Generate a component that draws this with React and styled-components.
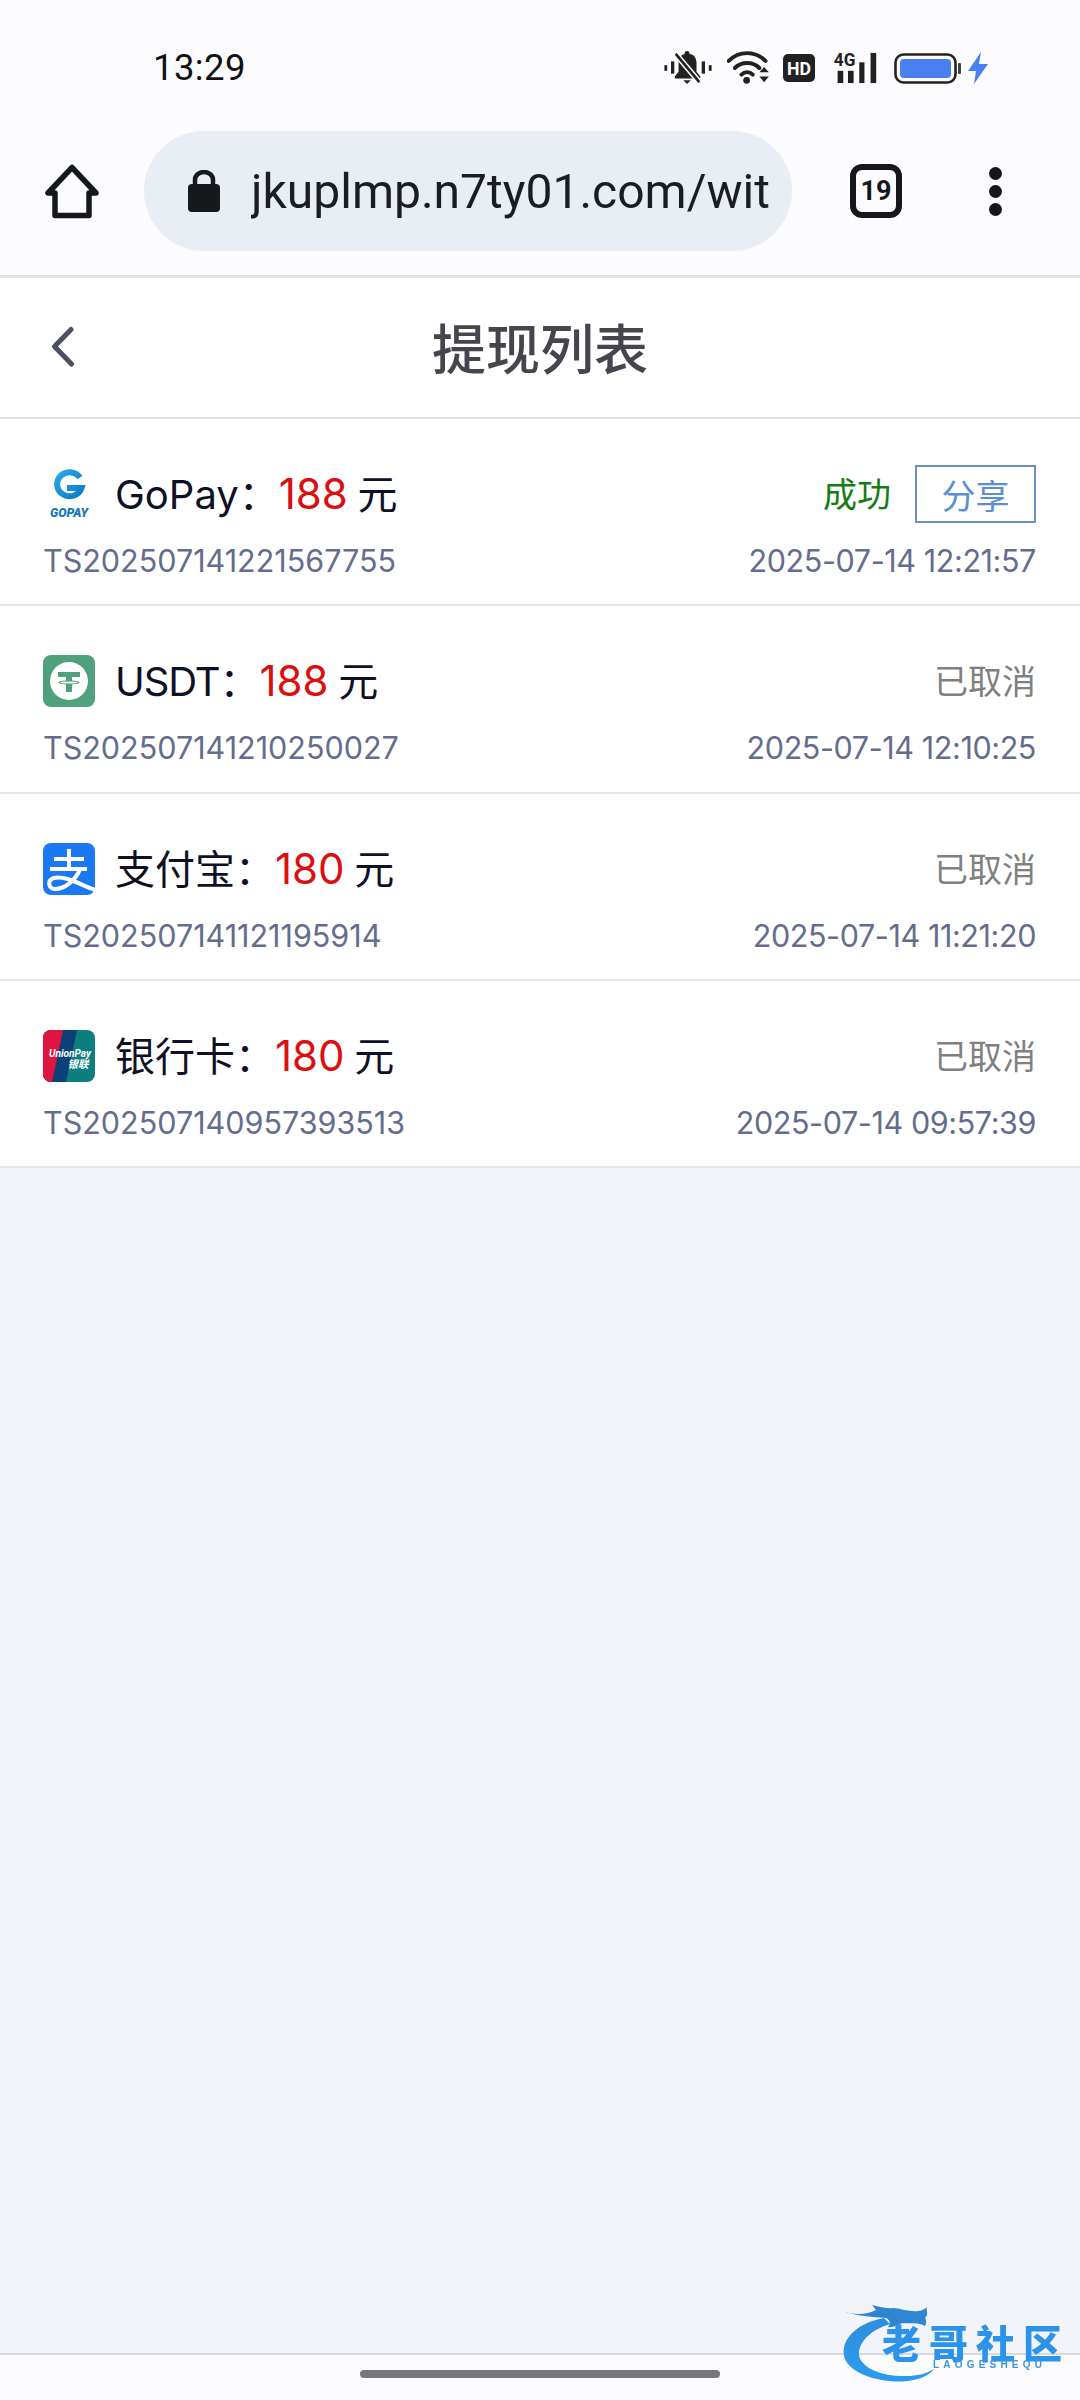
import React from "react";
import styled, { createGlobalStyle } from "styled-components";

const GlobalStyle = createGlobalStyle`
  html, body {
    margin: 0;
    padding: 0;
    background: #f2f4f9;
    font-family: Inter, "Noto Sans CJK SC", sans-serif;
  }
  * { box-sizing: border-box; }
`;

const Page = styled.div`
  position: relative;
  width: 1080px;
  height: 2400px;
  display: flex;
  flex-direction: column;
  overflow: hidden;
`;

const BrowserChrome = styled.div`
  background: #fcfcfe;
  height: 278px;
  border-bottom: 3px solid #e1e3e6;
`;

const StatusBar = styled.div`
  height: 131px;
  padding: 46px 92px 0 153px;
  display: flex;
  justify-content: space-between;
  align-items: flex-start;
`;

const Clock = styled.span`
  font-family: Roboto, sans-serif;
  font-size: 36.5px;
  line-height: 44px;
  color: #111;
  letter-spacing: 0.4px;
`;

const StatusIcons = styled.div`
  display: flex;
  align-items: center;
  height: 44px;
`;

const Toolbar = styled.div`
  display: flex;
  align-items: center;
  height: 120px;
  padding-left: 43px;
`;

const UrlPill = styled.div`
  width: 648px;
  height: 120px;
  margin-left: 43px;
  margin-right: 58px;
  border-radius: 60px;
  background: #e8eef4;
  display: flex;
  align-items: center;
  padding-left: 44px;
  overflow: hidden;
`;

const UrlText = styled.span`
  margin-left: 31px;
  font-family: Roboto, sans-serif;
  font-size: 48px;
  color: #1a1e22;
  white-space: nowrap;
  -webkit-mask-image: linear-gradient(to right, #000 86%, #7a8088 100%);
  mask-image: linear-gradient(to right, #000 86%, #7a8088 100%);
`;

const TabCount = styled.div`
  width: 52px;
  height: 54px;
  border: 6px solid #15181b;
  border-radius: 12px;
  display: flex;
  align-items: center;
  justify-content: center;
  font-family: Roboto, sans-serif;
  font-weight: 700;
  font-size: 27px;
  color: #15181b;
`;

const MenuDots = styled.div`
  margin-left: 87px;
  display: flex;
  flex-direction: column;
  gap: 5px;
`;

const MenuDot = styled.span`
  width: 13px;
  height: 13px;
  border-radius: 50%;
  background: #15181b;
`;

const TitleBar = styled.header`
  position: relative;
  height: 141px;
  background: #fff;
  border-bottom: 2px solid #e3e4e8;
  display: flex;
  align-items: center;
  justify-content: center;
`;

const BackButton = styled.div`
  position: absolute;
  left: 48px;
  top: 48px;
  display: flex;
`;

const Title = styled.h1`
  margin: 0 0 2px;
  font-size: 54px;
  font-weight: 500;
  color: #44454d;
  font-family: "Noto Sans CJK SC", sans-serif;
`;

const List = styled.div`
  background: #fff;
`;

const Row = styled.div`
  height: 187.3px;
  padding: 46px 44px 0 43px;
  border-bottom: 2px solid #e6e7eb;
`;

const TopLine = styled.div`
  display: flex;
  align-items: center;
  height: 58px;
`;

const BottomLine = styled.div`
  margin-top: 16px;
  display: flex;
  justify-content: space-between;
  font-size: 30.5px;
  line-height: 44px;
  color: #646d8d;
`;

const TimeText = styled.span`
  letter-spacing: -0.4px;
`;

const LogoBox = styled.div`
  width: 52px;
  height: 52px;
  flex: none;
  display: flex;
`;

const Label = styled.div`
  margin-left: 20px;
  padding-bottom: 4px;
  font-size: 40px;
  word-spacing: -1.5px;
  color: #0f1025;
  white-space: nowrap;
`;

const Name = styled.span`
  letter-spacing: ${(p) => p.$tracking || 0}px;
`;

const Amount = styled.span`
  color: #dc0f10;
  font-size: 42px;
`;

const Status = styled.div`
  margin-left: auto;
  padding-bottom: 3px;
  font-size: 34px;
  font-family: "Noto Sans CJK SC", sans-serif;
  color: ${(p) => (p.$ok ? "#127d12" : "#808080")};
`;

const ShareButton = styled.div`
  margin-left: 24px;
  width: 121px;
  height: 58px;
  border: 2px solid #6c91c0;
  color: #5b8fd2;
  font-size: 34px;
  font-family: "Noto Sans CJK SC", sans-serif;
  display: flex;
  align-items: center;
  justify-content: center;
`;

const Filler = styled.div`
  flex: 1;
`;

const NavBar = styled.div`
  height: 47px;
  background: #fcfcfe;
  border-top: 2px solid #d9dadd;
  display: flex;
  justify-content: center;
  padding-top: 15px;
`;

const HomeIndicator = styled.div`
  width: 360px;
  height: 8px;
  border-radius: 4px;
  background: #77787a;
`;

const Watermark = styled.div`
  position: absolute;
  left: 842px;
  top: 2303px;
  width: 225px;
  height: 90px;
  filter: blur(0.5px);
`;

const WatermarkText = styled.div`
  position: absolute;
  left: 40px;
  top: 21px;
  font-family: "Noto Sans CJK SC", sans-serif;
  font-weight: 900;
  font-size: 39px;
  line-height: 34px;
  letter-spacing: 8px;
  color: #2b93ea;
  white-space: nowrap;
`;

const WatermarkSub = styled.div`
  position: absolute;
  left: 91px;
  top: 57px;
  font-family: "Liberation Sans", sans-serif;
  font-size: 10px;
  font-weight: 700;
  line-height: 10px;
  letter-spacing: 4.2px;
  color: #3f95dc;
  white-space: nowrap;
`;

const HomeIcon = () => (
  <svg width="58" height="58" viewBox="0 0 58 58" fill="none">
    <path d="M29 5.500 5 31H12V53.500H46V31H53Z" stroke="#15181b" strokeWidth="5.500" strokeLinejoin="round" />
  </svg>
);

const LockIcon = () => (
  <svg width="32" height="42" viewBox="0 0 32 42">
    <rect x="0" y="14" width="32" height="28" rx="4" fill="#15191c" />
    <path d="M7 16V9.500a9 7.500 0 0 1 18 0V16" fill="none" stroke="#15191c" strokeWidth="4.500" />
  </svg>
);

const BackIcon = () => (
  <svg width="30" height="44" viewBox="0 0 30 44" fill="none">
    <path d="M23 3.500 6.500 20.500 23.500 38" stroke="#4c5060" strokeWidth="5" strokeLinecap="round" strokeLinejoin="round" />
  </svg>
);

const BellIcon = () => (
  <svg width="48" height="34" viewBox="0 0 50 36" style={{ marginRight: 15 }}>
    <g fill="#222">
      <rect x="0" y="15" width="3" height="6" />
      <rect x="7" y="11" width="3.500" height="13" />
      <rect x="39.500" y="11" width="3.500" height="13" />
      <rect x="47" y="15" width="3" height="6" />
      <path d="M24 3c-6 0-9 4-9 10v9l-4 5v2h27v-2l-4-5v-9c0-6-3-10-9-10z" />
      <path d="M20 31h8l-4 4z" />
      <rect x="21.500" y="0" width="5" height="5" rx="2.500" />
    </g>
    <path d="M11 2 38 34" stroke="#fcfcfe" strokeWidth="6" />
    <path d="M12 3 37 33" stroke="#222" strokeWidth="2.800" />
  </svg>
);

const WifiIcon = () => (
  <svg width="44" height="34" viewBox="0 0 46 36" fill="none" style={{ marginRight: 12 }}>
    <g stroke="#222" strokeWidth="4.200" strokeLinecap="round">
      <path d="M1.500 10.500c11-11 28-11 39 0" />
      <path d="M8 18c7-7 19-7 26 0" />
      <path d="M15 25c3.500-3.300 8.500-3.300 12 0" />
    </g>
    <circle cx="20.500" cy="31" r="3.600" fill="#222" />
    <path d="M34 22.500h10l-5-5.500zM34 27h10l-5 6z" fill="#222" />
  </svg>
);

const HdIcon = () => (
  <svg width="32" height="28" viewBox="0 0 32 28" style={{ marginRight: 18 }}>
    <rect width="32" height="28" rx="5" fill="#222" />
    <text x="16" y="21" fill="#fff" fontFamily="Roboto, sans-serif" fontWeight="700" fontSize="19" textAnchor="middle" textLength="24" lengthAdjust="spacingAndGlyphs">HD</text>
  </svg>
);

const SignalIcon = () => (
  <svg width="45" height="32" viewBox="0 0 46 34" style={{ marginRight: 16, overflow: "visible" }}>
    <text x="0" y="15" fill="#222" fontFamily="Roboto, sans-serif" fontWeight="700" fontSize="20" textLength="23" lengthAdjust="spacingAndGlyphs">4G</text>
    <g fill="#222">
      <rect x="4" y="20" width="6" height="13" />
      <rect x="15" y="20" width="6" height="13" />
      <rect x="27" y="11" width="5.500" height="22" />
      <rect x="39" y="1" width="6" height="32" />
    </g>
  </svg>
);

const BatteryIcon = () => (
  <svg width="68" height="31" viewBox="0 0 68 31" style={{ marginRight: 6 }}>
    <rect x="1.500" y="1.500" width="60" height="28" rx="8" fill="none" stroke="#222" strokeWidth="2.600" />
    <rect x="6" y="6" width="51" height="19" rx="4" fill="#4a7ff0" />
    <rect x="64" y="10" width="3" height="11" rx="1" fill="#444" />
  </svg>
);

const BoltIcon = () => (
  <svg width="20" height="32" viewBox="0 0 20 32">
    <path d="M13 0 0 19h8l-2 13 14-20h-9z" fill="#4a7ff0" />
  </svg>
);

const GoPayLogo = () => (
  <svg width="52" height="52" viewBox="0 0 52 52">
    <defs>
      <linearGradient id="goGrad" x1="0" y1="0" x2="1" y2="1">
        <stop offset="0" stopColor="#28a8e6" />
        <stop offset="1" stopColor="#0d7cc4" />
      </linearGradient>
    </defs>
    <path d="M37 9.500A12.500 12 0 1 0 38.500 20H24" fill="none" stroke="url(#goGrad)" strokeWidth="6" />
    <text x="26" y="49" fill="#1778b8" fontFamily="Roboto, sans-serif" fontWeight="900" fontStyle="italic" fontSize="12.500" textAnchor="middle" textLength="38" lengthAdjust="spacingAndGlyphs">GOPAY</text>
  </svg>
);

const UsdtLogo = () => (
  <svg width="52" height="52" viewBox="0 0 52 52">
    <rect width="52" height="52" rx="8" fill="#4fa07c" />
    <circle cx="26" cy="26" r="19" fill="#fdfefd" />
    <path d="M15 17h22v5h-8v3.500c4 .3 7.500 1 7.500 2s-3.500 1.700-7.500 2V37h-6v-7.500c-4-.3-7.500-1-7.500-2s3.500-1.700 7.500-2V22h-8z" fill="#4fa07c" />
    <ellipse cx="26" cy="27.500" rx="8.500" ry="1.100" fill="#fdfefd" />
  </svg>
);

const AlipayLogo = () => (
  <svg width="52" height="52" viewBox="0 0 52 52">
    <rect width="52" height="52" rx="8" fill="#1a78f2" />
    <g fill="none" stroke="#fff" strokeWidth="4">
      <path d="M11 16h30" />
      <path d="M26 6v20" />
      <path d="M7 26h37" />
      <path d="M37 26c-4 11-15 20-25 20-7 0-8-9-1-11 11-3 27 7 41 12" />
    </g>
  </svg>
);

const UnionPayLogo = () => (
  <svg width="52" height="52" viewBox="0 0 52 52">
    <defs>
      <clipPath id="upClip">
        <rect width="52" height="52" rx="8" />
      </clipPath>
    </defs>
    <g clipPath="url(#upClip)">
      <rect width="52" height="52" fill="#0e7f80" />
      <path d="M0 0h34L23 52H0z" fill="#0c4077" />
      <path d="M0 0h20L9 52H0z" fill="#de1540" />
    </g>
    <text x="27" y="27" fill="#fff" fontFamily="Roboto, sans-serif" fontWeight="700" fontStyle="italic" fontSize="10.500" textAnchor="middle" textLength="42" lengthAdjust="spacingAndGlyphs">UnionPay</text>
    <text x="35" y="38" fill="#fff" fontFamily="'Noto Sans CJK SC', sans-serif" fontWeight="700" fontStyle="italic" fontSize="10.500" textAnchor="middle">银联</text>
  </svg>
);

const DragonSwoosh = () => (
  <svg width="225" height="90" viewBox="0 0 225 90" fill="none">
    <defs>
      <linearGradient id="dragonGrad" x1="0" y1="0" x2="0" y2="1">
        <stop offset="0" stopColor="#2e8fdc" />
        <stop offset="1" stopColor="#2a9bf0" />
      </linearGradient>
    </defs>
    <path d="M42 15C14 20-1 37 2 53c4 18 38 28 64 25 12-1.500 22-6 26-12-9 5-17 7-27 7-22 1-46-7-48-21-1-12 11-25 31-31z" fill="url(#dragonGrad)" />
    <path d="M0 8c12 4 24 4 34-1l-4-5c8 2 16 4 22 3 8 1 16 4 24 3 3 0 7-2 9-4-1 5 2 7-2 11 2 3 1 6 0 8-7-4-15-2-23-3-4 2-10 5-14 4 3-4 2-7-2-9-12-1-30-2-44-7z" fill="#2e86d2" />
  </svg>
);

const records = [
  { id: "TS202507141221567755", time: "2025-07-14 12:21:57", name: "GoPay", amount: 188, Logo: GoPayLogo, ok: true },
  { id: "TS202507141210250027", time: "2025-07-14 12:10:25", name: "USDT", amount: 188, Logo: UsdtLogo, tracking: -1.1 },
  { id: "TS202507141121195914", time: "2025-07-14 11:21:20", name: "支付宝", amount: 180, Logo: AlipayLogo },
  { id: "TS202507140957393513", time: "2025-07-14 09:57:39", name: "银行卡", amount: 180, Logo: UnionPayLogo },
];

function App() {
  return (
    <Page>
      <GlobalStyle />
      <BrowserChrome>
        <StatusBar>
          <Clock>13:29</Clock>
          <StatusIcons>
            <BellIcon />
            <WifiIcon />
            <HdIcon />
            <SignalIcon />
            <BatteryIcon />
            <BoltIcon />
          </StatusIcons>
        </StatusBar>
        <Toolbar>
          <HomeIcon />
          <UrlPill>
            <LockIcon />
            <UrlText>jkuplmp.n7ty01.com/wit</UrlText>
          </UrlPill>
          <TabCount>19</TabCount>
          <MenuDots>
            <MenuDot />
            <MenuDot />
            <MenuDot />
          </MenuDots>
        </Toolbar>
      </BrowserChrome>
      <TitleBar>
        <BackButton>
          <BackIcon />
        </BackButton>
        <Title>提现列表</Title>
      </TitleBar>
      <List>
        {records.map(({ id, time, name, amount, Logo, ok, tracking }) => (
          <Row key={id}>
            <TopLine>
              <LogoBox>
                <Logo />
              </LogoBox>
              <Label>
                <Name $tracking={tracking}>{name}</Name>：<Amount>{amount}</Amount> 元
              </Label>
              <Status $ok={ok}>{ok ? "成功" : "已取消"}</Status>
              {ok && <ShareButton>分享</ShareButton>}
            </TopLine>
            <BottomLine>
              <span>{id}</span>
              <TimeText>{time}</TimeText>
            </BottomLine>
          </Row>
        ))}
      </List>
      <Filler />
      <NavBar>
        <HomeIndicator />
      </NavBar>
      <Watermark>
        <DragonSwoosh />
        <WatermarkText>老哥社区</WatermarkText>
        <WatermarkSub>LAOGESHEQU</WatermarkSub>
      </Watermark>
    </Page>
  );
}

export default App;
